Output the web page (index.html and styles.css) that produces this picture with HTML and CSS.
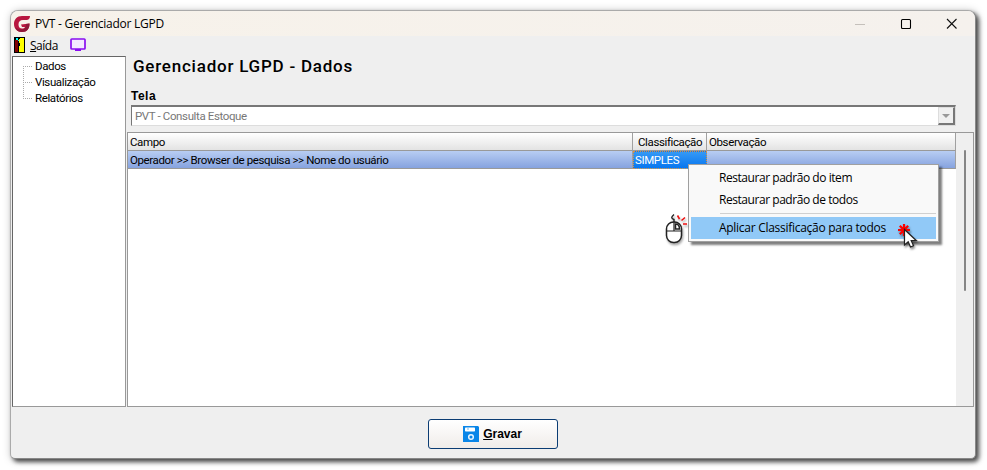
FILE: index.html
```html
<!DOCTYPE html>
<html lang="pt-BR">
<head>
  <meta charset="UTF-8">
  <title>PVT - Gerenciador LGPD</title>
  <link rel="stylesheet" href="styles.css">
</head>
<body>

  <div class="window">
    <header class="titlebar">
      <svg class="logo" width="16" height="16" viewBox="0 0 16 16">
        <path d="M16 0H8C3 0 0 3.500 0 8s3 8 8 8 7.500-3 7.500-8.500L7 8.500l1 2.500h3c-.6 1.200-1.600 1.600-3 1.600C5.700 12.600 4.500 11 4.500 8.500 4.500 5.500 6 4 9 4h3.500C14.500 4 16 2.500 16 0z" fill="#b8173f"/>
        <path d="M1 11c1 3 3.500 5 7 5 5 0 7.500-3 7.500-8.500L12 8c0 4-1.500 5.500-4 5.500S3 13 1 11z" fill="#8e1838"/>
      </svg>
      <span class="caption">PVT - Gerenciador LGPD</span>
      <svg class="controls" width="102" height="12" viewBox="0 0 102 12" fill="none">
        <path d="M0 6.500h10" stroke="#c5c0bb"/>
        <rect x="46.500" y="1.500" width="9" height="9" rx="1" stroke="#000" stroke-width="1.100"/>
        <path d="M92 1l9.500 9.500M101.500 1L92 10.500" stroke="#111" stroke-width="1.100"/>
      </svg>
    </header>

    <nav class="menubar">
      <svg width="12" height="16" viewBox="0 0 12 16" shape-rendering="crispEdges">
        <path d="M0 0h11v16H0z" fill="#000"/>
        <path d="M1 3h3v12H1z" fill="#800000"/>
        <path d="M2 1h2v2H2z" fill="#0ff"/>
        <path d="M5 2h1V1h4v14H5z" fill="#ff0"/>
        <path d="M5 6h1v3H5z" fill="#000"/>
        <path d="M4 3h1v1H4z" fill="#0ff"/>
      </svg>
      <span class="menu-text"><u>S</u>aída</span>
      <svg width="16" height="14" viewBox="0 0 16 14">
        <rect x="1" y="1" width="14" height="10" rx=".8" fill="#f3e9ff" stroke="#8a0df0" stroke-width="1.700"/>
        <path d="M5 11h6v2H5z" fill="#8a0df0"/>
      </svg>
    </nav>

    <div class="content">
      <ul class="tree">
        <li><span>Dados</span></li>
        <li><span>Visualização</span></li>
        <li><span>Relatórios</span></li>
      </ul>

      <main class="main">
        <h1><span>Gerenciador LGPD - Dados</span></h1>
        <label class="label">Tela</label>
        <div class="combo">
          <span>PVT - Consulta Estoque</span>
          <div class="combo-button">
            <svg width="8" height="4" viewBox="0 0 8 4"><path d="M0 0h8L4 4z" fill="#999"/></svg>
          </div>
        </div>

        <div class="grid">
          <div class="table">
            <div class="row head">
              <div class="cell"><span>Campo</span></div>
              <div class="cell classif"><span>Classificação</span></div>
              <div class="cell"><span>Observação</span></div>
            </div>
            <div class="row selected">
              <div class="cell"><span>Operador &gt;&gt; Browser de pesquisa &gt;&gt; Nome do usuário</span></div>
              <div class="cell focused"><span>SIMPLES</span></div>
              <div class="cell"></div>
            </div>
          </div>
          <div class="scroll"><div class="thumb"></div></div>
        </div>
      </main>
    </div>

    <footer class="footer">
      <button class="save">
        <svg width="16" height="16" viewBox="0 0 16 16">
          <path d="M0 0h15l1 1v15H0z" fill="#0a86e8"/>
          <rect x="2" y="1.500" width="10" height="4" rx=".7" fill="#fff"/>
          <path d="M4 2h2v2H4z" fill="#b9dcf8"/>
          <circle cx="8" cy="11" r="2.300" fill="none" stroke="#e8f5ff" stroke-width="1.500"/>
        </svg>
        <span><u>G</u>ravar</span>
      </button>
    </footer>
  </div>

  <div class="context-menu">
    <div class="item"><span>Restaurar padrão do item</span></div>
    <div class="item"><span>Restaurar padrão de todos</span></div>
    <div class="separator"></div>
    <div class="item active"><span>Aplicar Classificação para todos</span></div>
  </div>

  <svg class="mouse" width="26" height="34" viewBox="0 0 26 34" fill="none">
    <rect x="2.500" y="9" width="15" height="20.500" rx="7" fill="#fff" stroke="#222" stroke-width="1.500"/>
    <path d="M10 9v9M3 18h14" stroke="#222" stroke-width="1.200"/>
    <path d="M11.500 11c3 0 4 1.500 4 5h-4z" stroke="#222" stroke-width="1.500"/>
    <path d="M10 9V6.500C7 5.500 7 4 10 1.500" stroke="#222" stroke-width="1.400"/>
    <path d="M13.500 2.500l2 3.500M17.500 7.500l3.500-3M19 11h4" stroke="#e11" stroke-width="1.600"/>
  </svg>
  <svg class="pointer" width="24" height="28" viewBox="0 0 24 28">
    <path d="M7 1v12M1 7h12M2.800 2.800l8.400 8.400M11.200 2.800l-8.400 8.400" stroke="#f00" stroke-width="2.200"/>
    <path d="M7.500 6.500v15.500l3.700-3.300 2.300 5.300 3-1.300-2.300-5.200h5z" fill="#fff" stroke="#222" stroke-width="1.200"/>
  </svg>

</body>
</html>
```
FILE: styles.css
```css
* {
  box-sizing: border-box;
}

body {
  margin: 0;
  width: 987px;
  height: 470px;
  padding: 10px;
  overflow: hidden;
  background: #fff;
  font-family: Roboto, Arial, sans-serif;
  font-size: 11.5px;
  letter-spacing: -0.38px;
  color: #000;
}

span {
  white-space: nowrap;
}

svg {
  flex: none;
}

.window {
  display: flex;
  flex-direction: column;
  width: 966px;
  height: 449px;
  border: 1px solid #aaa;
  border-right-color: #888;
  border-bottom-color: #888;
  border-radius: 8px 8px 5px 5px;
  background: #efefef;
  overflow: hidden;
  box-shadow: 3px 3px 4px rgba(0, 0, 0, .65), 1px 1px 8px rgba(0, 0, 0, .25);
}

.titlebar {
  display: flex;
  flex: none;
  align-items: center;
  height: 25px;
  padding: 0 18px 0 3px;
  background: linear-gradient(90deg, #f7f2ea, #f5f1ed);
}

.caption {
  margin-left: 5px;
  font: 12px "Open Sans", sans-serif;
  letter-spacing: -0.25px;
}

.controls {
  margin-left: auto;
}

.menubar {
  display: flex;
  flex: none;
  align-items: center;
  height: 20px;
  padding: 0 3px 2px;
}

.menu-text {
  width: 28px;
  margin: 0 12px 0 4px;
  font: 12px "Open Sans", sans-serif;
  letter-spacing: -0.5px;
}

.content {
  display: flex;
  flex: none;
  height: 351px;
  padding: 0 1px;
}

.tree {
  flex: none;
  width: 114px;
  margin: 0 1px 0 0;
  padding: 1px 0 0 10px;
  list-style: none;
  background: #fff;
  border: 1px solid #999;
  border-left-color: #666;
  border-top-color: #666;
}

.tree li {
  display: flex;
  align-items: center;
  height: 16px;
  background: repeating-linear-gradient(180deg, #aaa 0 1px, transparent 1px 2px) 0 0 / 1px 100% no-repeat;
}

.tree li:first-child {
  background-size: 1px 8px;
  background-position: 0 8px;
}

.tree li:last-child {
  background-size: 1px 8px;
}

.tree li::before {
  content: "";
  width: 10px;
  height: 1px;
  margin-right: 2px;
  background: repeating-linear-gradient(90deg, #aaa 0 1px, transparent 1px 2px);
}

.main {
  display: flex;
  flex: 1;
  flex-direction: column;
}

h1 {
  height: 32px;
  margin: 0;
  padding: 0 0 0 6px;
  font-size: 17px;
  line-height: 21px;
  font-weight: 500;
  letter-spacing: 0.77px;
}

.label {
  height: 17px;
  padding-left: 4px;
  font: bold 12px/16px "Liberation Sans", Arial, sans-serif;
  letter-spacing: 0.5px;
}

.combo {
  display: flex;
  align-items: center;
  justify-content: space-between;
  width: 825px;
  height: 21px;
  margin: 0 0 6px 4px;
  padding-left: 3px;
  color: #777;
  background: #fff;
  border: 1px solid #777;
  border-top-width: 2px;
  border-right-color: #ddd;
  border-bottom-color: #ddd;
}

.combo-button {
  display: flex;
  align-items: center;
  justify-content: center;
  width: 17px;
  height: 18px;
  background: #f0f0f0;
  border: 1px solid #ddd;
  border-right: 2px solid #777;
  border-bottom: 2px solid #777;
}

.grid {
  display: flex;
  flex: 1;
  width: 847px;
  border: 1px solid #999;
  background: #fff;
}

.table {
  width: 828px;
}

.row {
  display: grid;
  grid-template-columns: 505px 74px 249px;
  height: 18px;
}

.cell {
  display: flex;
  align-items: center;
  padding-left: 2px;
  border-right: 1px solid #a0a0a0;
  border-bottom: 1px solid #999;
}

.head .cell {
  background: linear-gradient(#fff, #e3e3e3);
}

.head .classif {
  padding-left: 5px;
}

.selected .cell {
  background: linear-gradient(#b8cdf3, #86a3df);
}

.selected .focused {
  color: #fff;
  background: linear-gradient(#3599f5, #0876ef);
  border: 1px dotted #d89045;
  padding-left: 1px;
}

.scroll {
  flex: 1;
  background: #efefef;
}

.thumb {
  width: 2px;
  height: 141px;
  margin: 17px 0 0 8px;
  border-radius: 1px;
  background: #858585;
}

.footer {
  display: flex;
  flex: 1;
  justify-content: center;
  align-items: flex-start;
  padding: 12px 1px 0 0;
}

.save {
  display: flex;
  align-items: center;
  justify-content: center;
  gap: 4px;
  width: 130px;
  height: 30px;
  padding: 0;
  border: 1px solid #0b3c73;
  border-radius: 3px;
  background: linear-gradient(#fff, #f0ece9);
  font: bold 12px "Liberation Sans", Arial, sans-serif;
  color: #000;
}

.context-menu {
  position: absolute;
  left: 688px;
  top: 164px;
  width: 251px;
  height: 78px;
  padding: 2px;
  background: #f9f9f9;
  border: 1px solid #a0a0a0;
  box-shadow: 3px 3px 2px rgba(0, 0, 0, .5);
  font: 12px "Open Sans", sans-serif;
  letter-spacing: -0.45px;
}

.item {
  display: flex;
  align-items: center;
  height: 22px;
  padding: 0 0 2px 28px;
}

.separator {
  height: 1px;
  margin: 2px 0 3px 29px;
  background: #d0d0d0;
}

.active {
  background: #91c9f7;
  letter-spacing: -0.28px;
}

.mouse {
  position: absolute;
  left: 664px;
  top: 213px;
  filter: drop-shadow(1px 2px 1px rgba(0, 0, 0, .35));
}

.pointer {
  position: absolute;
  left: 897px;
  top: 223px;
  filter: drop-shadow(1px 2px 1px rgba(0, 0, 0, .45));
}
```
